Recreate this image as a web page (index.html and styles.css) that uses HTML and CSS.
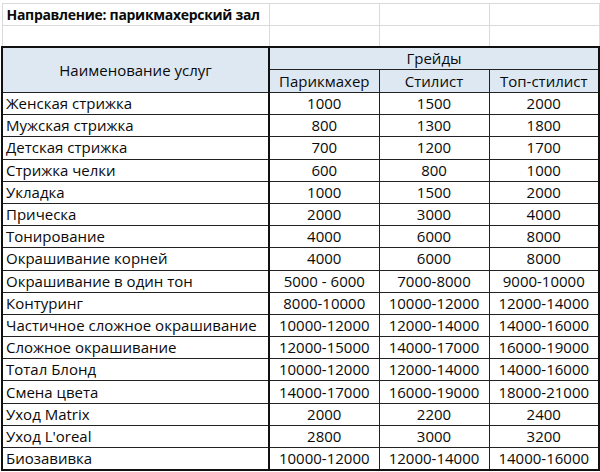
FILE: index.html
```html
<!DOCTYPE html>
<html lang="ru">
<head>
<meta charset="utf-8">
<link rel="stylesheet" href="styles.css">
</head>
<body>
<table class="sheet">
  <colgroup>
    <col class="c-name">
    <col class="c-g">
    <col class="c-g">
    <col class="c-g">
  </colgroup>
  <tr class="grid top"><td class="title">Направление: парикмахерский зал</td><td></td><td></td><td></td></tr>
  <tr class="grid"><td></td><td></td><td></td><td></td></tr>
  <tr class="head h1"><th rowspan="2" class="hname">Наименование услуг</th><th colspan="3">Грейды</th></tr>
  <tr class="head h2"><th>Парикмахер</th><th>Стилист</th><th>Топ-стилист</th></tr>
  <tr><td class="n">Женская стрижка</td><td>1000</td><td>1500</td><td>2000</td></tr>
  <tr><td class="n">Мужская стрижка</td><td>800</td><td>1300</td><td>1800</td></tr>
  <tr><td class="n">Детская стрижка</td><td>700</td><td>1200</td><td>1700</td></tr>
  <tr><td class="n">Стрижка челки</td><td>600</td><td>800</td><td>1000</td></tr>
  <tr><td class="n">Укладка</td><td>1000</td><td>1500</td><td>2000</td></tr>
  <tr><td class="n">Прическа</td><td>2000</td><td>3000</td><td>4000</td></tr>
  <tr><td class="n">Тонирование</td><td>4000</td><td>6000</td><td>8000</td></tr>
  <tr><td class="n">Окрашивание корней</td><td>4000</td><td>6000</td><td>8000</td></tr>
  <tr><td class="n">Окрашивание в один тон</td><td>5000 - 6000</td><td>7000-8000</td><td>9000-10000</td></tr>
  <tr><td class="n">Контуринг</td><td>8000-10000</td><td>10000-12000</td><td>12000-14000</td></tr>
  <tr><td class="n">Частичное сложное окрашивание</td><td>10000-12000</td><td>12000-14000</td><td>14000-16000</td></tr>
  <tr><td class="n">Сложное окрашивание</td><td>12000-15000</td><td>14000-17000</td><td>16000-19000</td></tr>
  <tr><td class="n">Тотал Блонд</td><td>10000-12000</td><td>12000-14000</td><td>14000-16000</td></tr>
  <tr><td class="n">Смена цвета</td><td>14000-17000</td><td>16000-19000</td><td>18000-21000</td></tr>
  <tr><td class="n">Уход Matrix</td><td>2000</td><td>2200</td><td>2400</td></tr>
  <tr><td class="n">Уход L'oreal</td><td>2800</td><td>3000</td><td>3200</td></tr>
  <tr class="last"><td class="n">Биозавивка</td><td>10000-12000</td><td>12000-14000</td><td>14000-16000</td></tr>
</table>
</body>
</html>
```

FILE: styles.css
```css
html, body {
  margin: 0;
  padding: 0;
  background: #ffffff;
}
body {
  padding: 3px 0 0 1px;
  font-family: "Open Sans", "Noto Sans", sans-serif;
  font-size: 15px;
  color: #0a0a0a;
}
.sheet {
  border-collapse: collapse;
  table-layout: fixed;
  width: 597px;
}
.c-name { width: 267px; }
.c-g { width: 110px; }
.sheet td, .sheet th {
  padding: 0 3px;
  height: 21.2px;
  line-height: 19px;
  border: 1px solid #222;
  text-align: center;
  font-weight: normal;
  white-space: nowrap;
  overflow: hidden;
}
.sheet .grid td {
  border: 1px solid #dadada;
  height: 20px;
}
.sheet .grid.top td { height: 21px; }
.sheet .title {
  text-align: left;
  font-weight: bold;
  font-size: 14px;
  letter-spacing: -0.3px;
  overflow: visible;
  padding-left: 4px;
}
.sheet .head th {
  background: #dde8f3;
  height: 22px;
}
.sheet .h1 th { border-top: 2px solid #111; height: 21px; }
.sheet .hname { border-left: 2px solid #111; border-right: 2px solid #111; }
.sheet .n {
  text-align: left;
  border-left: 2px solid #111;
  border-right: 2px solid #111;
}
.sheet tr td:last-child, .sheet .head th:last-child { border-right: 2px solid #111; }
.sheet .grid td:last-child { border-right: 1px solid #dadada; }
.sheet .last td { border-bottom: 2px solid #111; height: 20.5px; }
```
